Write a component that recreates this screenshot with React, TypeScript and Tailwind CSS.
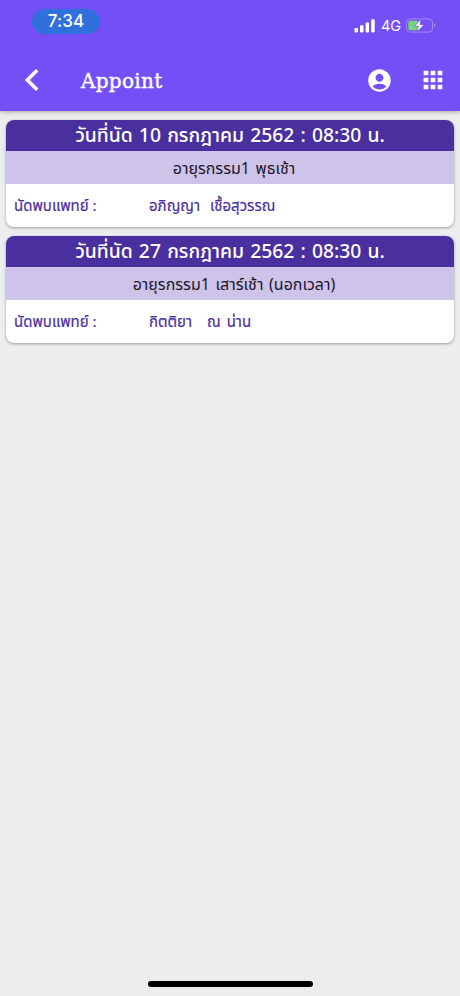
import React from "react";
import { MdAccountCircle, MdApps } from "react-icons/md";

interface Appointment {
  id: number;
  date: string;
  clinic: string;
  firstName: string;
  lastName: string;
  nameGap: string;
}

const appointments: Appointment[] = [
  {
    id: 1,
    date: "วันที่นัด 10 กรกฎาคม 2562 : 08:30 น.",
    clinic: "อายุรกรรม1 พุธเช้า",
    firstName: "อภิญญา",
    lastName: "เชื้อสุวรรณ",
    nameGap: "gap-[10px]",
  },
  {
    id: 2,
    date: "วันที่นัด 27 กรกฎาคม 2562 : 08:30 น.",
    clinic: "อายุรกรรม1 เสาร์เช้า (นอกเวลา)",
    firstName: "กิตติยา",
    lastName: "ณ น่าน",
    nameGap: "gap-[15px]",
  },
];

function StatusBar() {
  return (
    <div className="flex h-[50px] items-start justify-between pl-8 pr-6">
      <div className="mt-[9px] flex h-[25px] w-[68px] items-center justify-center rounded-full bg-[#3070dc] pt-px font-['Inter',sans-serif] text-[17px] font-medium tracking-[0.1px]">
        7:34
      </div>
      <div className="mt-[17px] flex h-[17px] items-center">
        <svg width="21" height="14" viewBox="0 0 21 14" fill="currentColor">
          <rect x="0.5" y="9" width="3.5" height="4.4" rx="0.8" />
          <rect x="6" y="6.3" width="3.5" height="7.1" rx="0.8" />
          <rect x="11.6" y="3.5" width="3.5" height="9.9" rx="0.8" />
          <rect x="17.2" y="0.3" width="3.5" height="13.1" rx="0.8" />
        </svg>
        <span className="ml-[6px] mt-px w-[19px] font-['Inter',sans-serif] text-[14.5px] leading-none">
          4G
        </span>
        <svg
          width="30"
          height="15"
          viewBox="0 0 30 15"
          className="ml-[6px]"
          fill="none"
        >
          <rect x="0.5" y="0.9" width="26" height="13.2" rx="3.6" stroke="#a08bf8" />
          <path d="M28 5.2c1.6.6 1.6 4 0 4.6z" fill="#a08bf8" />
          <rect x="2.3" y="2.7" width="10.5" height="9.6" rx="1.8" fill="#73d57b" />
          <path
            d="M15.4 0.8 8.4 8.2h4l-1.6 6 7.4-7.6h-4.2z"
            fill="white"
            stroke="#744ff6"
            strokeWidth="0.8"
          />
        </svg>
      </div>
    </div>
  );
}

function Header() {
  return (
    <header className="relative z-10 h-[111px] bg-[#744ff6] text-white shadow-[0_1px_4px_rgba(0,0,0,0.3)]">
      <StatusBar />
      <div className="flex h-[60px] items-center pl-6 pr-[13px]">
        <button type="button" aria-label="Back" className="flex">
          <svg width="16" height="24" viewBox="0 0 16 24" fill="none">
            <path d="M13.2 2.2 3.3 12l9.9 9.8" stroke="white" strokeWidth="3.5" />
          </svg>
        </button>
        <h1 className="ml-[41px] mt-px font-['DejaVu_Serif',serif] text-[20px] tracking-[0.3px] [-webkit-text-stroke:0.4px_white]">
          Appoint
        </h1>
        <div className="ml-auto flex items-center gap-[26px]">
          <MdAccountCircle size={27} />
          <MdApps size={28} />
        </div>
      </div>
    </header>
  );
}

function AppointmentCard({ item }: { item: Appointment }) {
  return (
    <article className="h-[107px] overflow-hidden rounded-[8px] bg-white shadow-[0_1px_3px_rgba(0,0,0,0.35)]">
      <h2 className="flex h-[31px] items-center justify-center whitespace-pre bg-[#4a2f9f] pt-1 text-[19.3px] font-medium text-white [word-spacing:1.2px]">
        {item.date}
      </h2>
      <div className="flex h-[33px] items-center justify-center whitespace-pre bg-[#cec3e8] pl-2 pt-0.5 text-[16px] text-[#1d152b] [word-spacing:1.5px]">
        {item.clinic}
      </div>
      <div className="flex h-[43px] items-center whitespace-pre pl-2 pt-[3px] text-[15px] text-[#4a2f9f] [-webkit-text-stroke:0.2px_#4a2f9f]">
        <span className="w-[135px]">นัดพบแพทย์ :</span>
        <span className={`flex ${item.nameGap}`}>
          <span>{item.firstName}</span>
          <span className="[word-spacing:2px]">{item.lastName}</span>
        </span>
      </div>
    </article>
  );
}

export default function App() {
  return (
    <div className="flex h-[996px] w-[460px] flex-col overflow-hidden bg-[#ecedef] font-['Noto_Sans_Thai','Noto_Sans','Open_Sans',sans-serif]">
      <Header />
      <main className="flex flex-1 flex-col gap-[9px] px-[6px] pt-[9px]">
        {appointments.map((item) => (
          <AppointmentCard key={item.id} item={item} />
        ))}
      </main>
      <div className="mx-auto mb-[9px] h-[6px] w-[165px] rounded-full bg-black" />
    </div>
  );
}
